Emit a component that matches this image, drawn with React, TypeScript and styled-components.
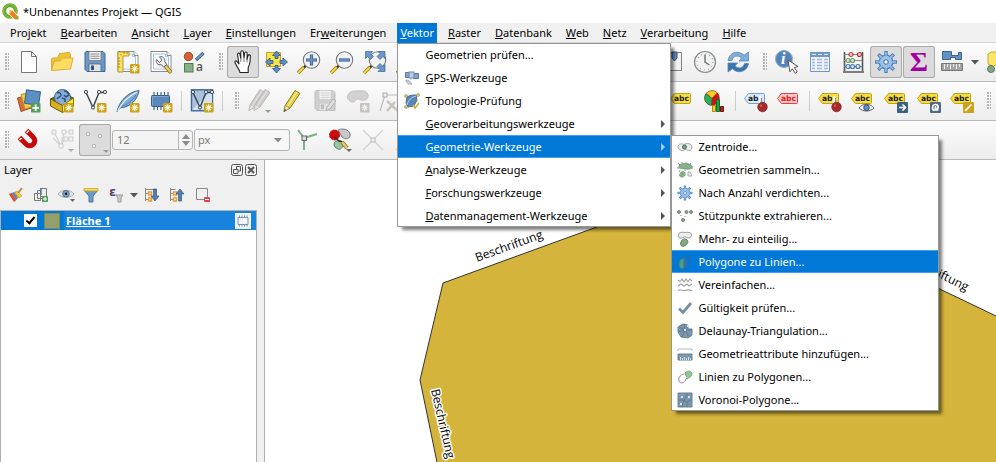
import React from "react";
import styled, { createGlobalStyle, css } from "styled-components";

const Global = createGlobalStyle`
  *, *::before, *::after { box-sizing: border-box; }
  body { margin: 0; overflow: hidden; }
  body, button, input, select {
    font-family: "Noto Sans", "Open Sans", sans-serif;
    font-size: 11px;
    line-height: 16px;
    color: #000;
  }
  button { border: 0; padding: 0; background: none; }
  svg { display: block; overflow: visible; }
`;

/* ---------- frame ---------- */

const Window = styled.div`
  display: flex;
  flex-direction: column;
  height: 100vh;
  min-height: 300px;
  background: #f0f0f0;
`;

const TitleBar = styled.header`
  display: flex;
  align-items: center;
  gap: 4px;
  height: 23px;
  padding: 0 2px;
  background: #fff;
`;

const Title = styled.h1`
  margin: 0;
  font-size: 11px;
  font-weight: 400;
`;

const MenuBar = styled.nav`
  display: flex;
  height: 20px;
  padding-left: 3px;
  border-bottom: 1px solid #d4d4d4;
`;

const MenuSlot = styled.div`
  position: relative;
  height: 20px;
`;

const MenuTitle = styled.button<{ $open?: boolean }>`
  height: 20px;
  padding: 0 7px;
  white-space: nowrap;
  ${(p) =>
    p.$open &&
    css`
      padding: 0 3px;
      margin: 0 4px;
      background: #0078d7;
      color: #fff;
    `}
`;

const Popup = styled.div<{ $width: number; $sub?: boolean }>`
  position: absolute;
  z-index: ${(p) => (p.$sub ? 3 : 2)};
  top: ${(p) => (p.$sub ? "0" : "100%")};
  left: ${(p) => (p.$sub ? "100%" : "4px")};
  width: ${(p) => p.$width}px;
  background: #fff;
  box-shadow: 4px 4px 3px -1px rgba(0, 0, 0, 0.5);
  &::after {
    content: "";
    position: absolute;
    inset: 0;
    border: 1px solid #979797;
    pointer-events: none;
  }
`;

const PopupRow = styled.div`
  position: relative;
`;

const PopupItem = styled.button<{ $active?: boolean }>`
  display: grid;
  grid-template-columns: 16px 1fr 8px;
  align-items: center;
  column-gap: 5px;
  width: 100%;
  height: 23px;
  padding: 0 4px 0 6px;
  text-align: left;
  white-space: nowrap;
  color: ${(p) => (p.$active ? "#fff" : "#000")};
  background: ${(p) => (p.$active ? "#0078d7" : "transparent")};
  box-shadow: ${(p) => (p.$active ? "inset 0 1px #42a0f0, inset 0 -1px #42a0f0" : "none")};
`;

const RootPopupItem = styled(PopupItem)`
  padding-left: 7px;
`;

/* ---------- toolbars ---------- */

const Toolbar = styled.div`
  display: flex;
  align-items: center;
  gap: 1px;
  height: 39px;
  overflow: hidden;
  border-bottom: 1px solid #b9b9b9;
  background: linear-gradient(#fcfcfc, #ededed);
  & > * { flex: none; }
`;

const Handle = styled.span<{ $first?: boolean }>`
  width: ${(p) => (p.$first ? 12 : 15)}px;
  height: 18px;
  padding: 0 3px 0 ${(p) => (p.$first ? 5 : 8)}px;
  background: radial-gradient(circle at 1px 1px, #b4b4b4 0 1px, transparent 1px) content-box 0 0 / 3px 3px;
`;

const Separator = styled.span`
  width: 7px;
  height: 20px;
  background: linear-gradient(#ccc, #ccc) center / 1px 100% no-repeat;
`;

const Behind = styled.span`
  width: 257px;
`;

const Tool = styled.button<{ $on?: boolean }>`
  display: grid;
  place-items: center;
  width: 32px;
  height: 32px;
  border-radius: 3px;
  ${(p) =>
    p.$on &&
    css`
      background: #dcdcdc;
      box-shadow: inset 0 0 0 1px #a9a9a9;
    `}
`;

const DropArrow = styled.button`
  display: grid;
  place-items: center;
  width: 12px;
  height: 32px;
`;

const Spin = styled.label`
  display: flex;
  width: 81px;
  height: 20px;
  border: 1px solid #b4b4b4;
  border-radius: 3px;
  background: #f4f4f4;
`;

const SpinInput = styled.input`
  flex: 1;
  min-width: 0;
  padding: 0 4px;
  border: 0;
  background: none;
  color: #787878;
`;

const SpinArrows = styled.span`
  display: grid;
  place-items: center;
  width: 14px;
  border-left: 1px solid #b4b4b4;
`;

const UnitBox = styled.label`
  display: grid;
  align-items: center;
  width: 96px;
  height: 22px;
  border: 1px solid #b4b4b4;
  border-radius: 3px;
  background: #f7f7f7;
  & > * { grid-area: 1 / 1; }
  & > svg { justify-self: end; margin-right: 7px; pointer-events: none; }
`;

const UnitSelect = styled.select`
  appearance: none;
  width: 100%;
  height: 20px;
  padding: 0 3px;
  border: 0;
  background: none;
  color: #787878;
`;

/* ---------- work area ---------- */

const Work = styled.main`
  display: flex;
  flex: 1;
  min-height: 0;
`;

const Dock = styled.aside`
  display: flex;
  flex-direction: column;
  width: 265px;
  flex: none;
  padding: 0 7px 0 0;
  border-right: 1px solid #b0b0b0;
`;

const DockHead = styled.div`
  display: flex;
  align-items: center;
  gap: 1px;
  height: 20px;
  padding-left: 4px;
`;

const DockTitle = styled.h2`
  flex: 1;
  margin: 0;
  font-size: 11px;
  font-weight: 400;
`;

const DockButton = styled.button`
  display: grid;
  place-items: center;
  width: 13px;
  height: 13px;
`;

const DockTools = styled.div`
  display: flex;
  align-items: center;
  gap: 1px;
  height: 30px;
  padding-left: 4px;
`;

const DockTool = styled.button`
  display: grid;
  place-items: center;
  width: 24px;
  height: 24px;
`;

const DockArrow = styled.button`
  display: grid;
  place-items: center;
  width: 10px;
  height: 24px;
`;

const Tree = styled.div`
  flex: 1;
  border: 1px solid #b0b0b0;
  border-bottom: 0;
  background: #fff;
`;

const LayerRow = styled.div`
  display: flex;
  align-items: center;
  height: 19px;
  padding: 0 5px 0 23px;
  background: linear-gradient(90deg, #0078d7 0 62px, #1883dc 64px);
`;

const Check = styled.input`
  appearance: none;
  display: grid;
  place-items: center;
  width: 13px;
  height: 13px;
  margin: 0;
  background: #fff;
  &:checked::after {
    content: "";
    width: 5px;
    height: 9px;
    margin-top: -2px;
    border: solid #000;
    border-width: 0 2px 2px 0;
    transform: rotate(40deg);
  }
`;

const Swatch = styled.span`
  width: 16px;
  height: 16px;
  margin: 0 6px 0 7px;
  border: 1px solid #7d8a55;
  background: #949f6b;
`;

const LayerName = styled.label`
  flex: 1;
  color: #fff;
  font-weight: 700;
  text-decoration: underline;
`;

const MemoryBadge = styled.button`
  display: grid;
  place-items: center;
  width: 16px;
  height: 16px;
  background: #f2f5f8;
`;

const Canvas = styled.section`
  flex: 1;
  min-width: 0;
  overflow: hidden;
  background: #fff;
  & > svg { width: 100%; height: 100%; }
`;

/* ---------- icon helpers ---------- */

type Kids = { children?: React.ReactNode };

const I = ({ children }: Kids) => (
  <svg width="24" height="24" viewBox="0 0 24 24" fill="none" aria-hidden="true">
    {children}
  </svg>
);

const S = ({ children }: Kids) => (
  <svg width="16" height="16" viewBox="0 0 16 16" fill="none" aria-hidden="true">
    {children}
  </svg>
);

const Tri = ({ color = "#555" }: { color?: string }) => (
  <svg width="8" height="5" viewBox="0 0 8 5" aria-hidden="true">
    <path d="M0 0h8L4 4.5z" fill={color} />
  </svg>
);

const Corner = ({ c = "#666" }: { c?: string }) => <path d="M18 21h6l-3 3z" fill={c} />;

const Star = ({ gray }: { gray?: boolean }) => (
  <>
    <rect x="14" y="14" width="9.5" height="9.5" rx="1" fill={gray ? "#c4c2bb" : "#cba31b"} />
    <path
      d="M18.7 15.3v7M15.3 18.8h7M16.3 16.4l4.8 4.8M21.1 16.4l-4.8 4.8"
      stroke={gray ? "#f0f0f0" : "#fff8df"}
      strokeWidth="1.1"
    />
  </>
);

const Lens = ({ children }: Kids) => (
  <I>
    <path d="M9 15.5l-3 3" stroke="#222" strokeWidth="2.4" />
    <path d="M7 17L1 23" stroke="#a68215" strokeWidth="3.6" />
    <path d="M6.6 17.4L1.2 22.8" stroke="#fbd94c" strokeWidth="1.8" />
    <circle cx="14.5" cy="10" r="8.2" fill="#f2f2f2" stroke="#777" strokeWidth="1.1" />
    {children}
  </I>
);

const Pencil = ({ fill, edge }: { fill: string; edge: string }) => (
  <>
    <path d="M4 22.5l1.2-6L15 1.5l5 3L10 19z" fill={fill} stroke={edge} />
    <path d="M7 18L17 3" stroke="#fff" strokeOpacity=".45" strokeWidth="1.4" />
    <path d="M4 22.5l1.2-6 4.8 2.6z" fill="#f3e8c7" stroke={edge} strokeWidth=".7" />
    <path d="M4 22.7l.6-2.8 1.8 1.2z" fill="#444" />
  </>
);

const GrayPencil = () => (
  <>
    <path d="M4 22.5l1.2-6L15 1.5l5 3L10 19z" fill="#cfcaca" stroke="#bdb7b7" />
    <path d="M7.5 17.5L17 3" stroke="#e2dfdf" strokeWidth="1.4" />
    <path d="M4 22.5l1.2-6 4.8 2.6z" fill="#e6e2de" stroke="#bdb7b7" strokeWidth=".7" />
  </>
);

const Tag = ({
  text = "abc",
  fill = "#f6dc3c",
  edge = "#bda31c",
  ink = "#222",
  children,
}: Kids & { text?: string; fill?: string; edge?: string; ink?: string }) => (
  <I>
    <path d="M.5 9.5l4-5h15q1 0 1 1v8q0 1-1 1h-15z" fill={fill} stroke={edge} />
    <text x="4" y="12.3" fontFamily="DejaVu Sans" fontWeight="700" fontSize="7.6" fill={ink}>
      {text}
    </text>
    {children}
  </I>
);

const Pin = () => (
  <>
    <path d="M16.5 15V9" stroke="#fff" strokeWidth="3.4" strokeLinecap="round" />
    <path d="M17.5 15V9" stroke="#888" strokeWidth="1.2" />
    <circle cx="18.5" cy="18" r="4.8" fill="#a52a2a" stroke="#7d1a1a" strokeWidth=".6" />
    <circle cx="17" cy="16.6" r="1.2" fill="#c96a6a" />
  </>
);

const teeth = [0, 45, 90, 135, 180, 225, 270, 315];

const Gear = ({ r, c }: { r: number; c: number }) => (
  <>
    {teeth.map((a) => (
      <path
        key={a}
        d={`M${c} ${c - r * 0.5}V${c - r}`}
        stroke="#4b83bf"
        strokeWidth={r * 0.32}
        transform={`rotate(${a} ${c} ${c})`}
      />
    ))}
    <circle cx={c} cy={c} r={r * 0.62} fill="#9cc0e6" stroke="#4b83bf" strokeWidth={r * 0.12} />
    {teeth.map((a) => (
      <path
        key={a}
        d={`M${c} ${c - r * 0.5}V${c - r * 0.9}`}
        stroke="#9cc0e6"
        strokeWidth={r * 0.14}
        transform={`rotate(${a} ${c} ${c})`}
      />
    ))}
    <circle cx={c} cy={c} r={r * 0.2} fill="#f4f8fc" stroke="#4b83bf" strokeWidth={r * 0.1} />
  </>
);

const Chip = () => (
  <>
    <path d="M5 3v18M8.500 3v18M12 3v18M15.500 3v18M19 3v18" stroke="#365f8c" strokeWidth="1.1" />
    <rect x="2.5" y="6.5" width="18" height="11" rx="1" fill="#5a88ba" stroke="#365f8c" />
    <path d="M3.5 16V7.5h16" stroke="#7fa5cf" />
  </>
);

const Vee = ({ c = "#34434f" }: { c?: string }) => (
  <>
    <path d="M3 3.5L10 18.5 16 3.5h6" stroke={c} strokeWidth="1.4" />
    <g fill="#fff" stroke={c}>
      <circle cx="3" cy="3" r="1.6" />
      <circle cx="10" cy="18.5" r="1.6" />
      <circle cx="16" cy="3" r="1.6" />
      <circle cx="22" cy="3" r="1.6" />
    </g>
  </>
);

const Page = () => (
  <>
    <path d="M2 1.5h16l4 4v16H2z" fill="#fff" stroke="#8c8c8c" />
    <path d="M4.5 4h12v2.5h3V19h-15z" fill="#f6f9ff" stroke="#a9c0e0" />
    <path d="M18 1.5v4h4" fill="#fff" stroke="#8c8c8c" />
  </>
);

const badge = (fill: string, d: string) => (
  <>
    <rect x="13" y="13" width="11" height="11" rx="1" fill={fill} />
    <path d={d} stroke="#fff" strokeWidth="1.7" />
  </>
);

/* ---------- icons ---------- */

const Disk = ({ gray }: { gray?: boolean }) => (
  <>
    <path
      d="M3 1.5h17l2 2v18H4l-2-2v-17z"
      fill={gray ? "#d0d0d0" : "#6c98c8"}
      stroke={gray ? "#bdbdbd" : "#3d6795"}
    />
    <path d="M6 1.5h12v9H6z" fill="#f4f4f4" stroke={gray ? "#c8c8c8" : "#777"} strokeWidth=".8" />
    <path d="M7.5 4h9M7.5 6.2h9M7.5 8.4h9" stroke={gray ? "#d0d0d0" : "#8a8a8a"} />
    <path d="M6 14h12v7.5H6z" fill="#e3e3e3" stroke={gray ? "#c4c4c4" : "#47658a"} strokeWidth=".8" />
    <path d="M8 15.5h3v4.5H8z" fill={gray ? "#bbb" : "#34537a"} />
  </>
);

const fileTools: [string, React.ReactNode][] = [
  [
    "Neu",
    <I>
      <path d="M4.5 1.5h10l5 5v16h-15z" fill="#fff" stroke="#757575" />
      <path d="M14.5 1.5v5h5" stroke="#757575" />
    </I>,
  ],
  [
    "Öffnen",
    <I>
      <path d="M1.5 20V9l1-1h5l2-4.500 10-1 1 2v3z" fill="#f0c232" stroke="#d9ae35" />
      <path d="M1.5 20.5L4 11h6l2-3h11L20.5 19z" fill="#ffdc63" stroke="#d9ae35" />
    </I>,
  ],
  ["Speichern", <I><Disk /></I>],
  [
    "Neues Layout",
    <I>
      <Page />
      <path d="M2 2h11v4H7v16H2z" fill="#fbe06a" stroke="#bb981a" />
      <path d="M5 4v1.5M8 2v2M11 2v2M2 8h2M2 11h2.500M2 14h2M2 17h2.500" stroke="#9d7d10" strokeWidth=".8" />
      <Star />
    </I>,
  ],
  [
    "Layoutverwaltung",
    <I>
      <Page />
      <path d="M15 14l6 7.5" stroke="#8f7414" strokeWidth="4" strokeLinecap="round" />
      <path d="M15 14l6 7.5" stroke="#e5cb6d" strokeWidth="2.4" strokeLinecap="round" />
      <path
        d="M7.5 9.5l3 3 2.500-2.500-2.500-3.200c3-1 6 1.500 5.300 5l2 2.700-3 2.500-2.500-2.300c-3.500.8-5.800-2-4.800-5.200z"
        fill="#eee"
        stroke="#555"
        strokeWidth=".9"
      />
    </I>,
  ],
  [
    "Stilverwaltung",
    <I>
      <circle cx="6.5" cy="6.5" r="4.2" fill="#d2613a" stroke="#a84320" />
      <path d="M14 10L21.5 3" stroke="#34537a" strokeWidth="3.2" />
      <path d="M14.5 9.5L21 3.5" stroke="#6f9bca" strokeWidth="1.8" />
      <rect x="2.5" y="13.5" width="8.5" height="8.5" fill="#86b083" stroke="#56785a" />
      <text x="14" y="21" fontFamily="Open Sans" fontSize="12" fontWeight="600" fill="#555">a</text>
    </I>,
  ],
];

const cornerArrows = (
  <path
    d="M2.5 1.5h7l-2 2 3 3-3 3-3-3-2 2zM22 1.5h-7l2 2-3 3 3 3 3-3 2 2zM22 21.500h-7l2-2-3-3 3-3 3 3 2-2z"
    fill="#6b98c9"
    stroke="#3c658f"
    strokeWidth=".7"
  />
);

const hiddenMapTools = [
  "Zur Auswahl zoomen",
  "Auf Layer zoomen",
  "Native Auflösung",
  "Zoom zurück",
  "Zoom vor",
  "Neue Ansicht",
  "3D-Ansicht",
  "Neues Lesezeichen",
];

const mapTools: [string, React.ReactNode, boolean?][] = [
  [
    "Karte verschieben",
    <I>
      <path
        d="M9 22.5C8.5 19 5.5 17 4 12.500c-.6-1.800 1.400-2.200 2.300-.7L8 14.200 6.600 4.800C6.400 2.600 8.600 2.600 9 4.500l.8 4L9.800 2.300c0-2 2.600-2 2.700 0l.5 6 .6-5c.3-1.900 2.600-1.600 2.600.2l-.2 6 1-3.600c.5-1.700 2.600-1.200 2.400.6-.3 3.500-.1 7.500-2.200 11v5z"
        fill="#fff"
        stroke="#222"
        strokeWidth="1.1"
      />
      <path d="M9.800 8v4M13 8v4M16 9v3.500" stroke="#444" strokeWidth=".7" />
    </I>,
    true,
  ],
  [
    "Zur Auswahl verschieben",
    <I>
      <path d="M2.500 2.500h14v14h-14z" fill="#fbe34a" stroke="#c2a51d" />
      <path
        d="M12.500 1l4 4.500h-2.500v3h-3v-3H8.500zM12.500 23l4-4.500h-2.500v-3h-3v3H8.500zM1.500 12L6 8v2.500h3v3H6V16zM23.500 12L19 8v2.500h-3v3h3V16z"
        fill="#5f8fc4"
        stroke="#2f5580"
        strokeWidth=".8"
      />
    </I>,
  ],
  [
    "Hineinzoomen",
    <Lens>
      <path d="M14.500 4.500v11M9 10h11" stroke="#355f8d" strokeWidth="3.2" />
      <path d="M14.500 5.200v9.600M9.700 10h9.600" stroke="#6b98c9" strokeWidth="1.6" />
    </Lens>,
  ],
  [
    "Hinauszoomen",
    <Lens>
      <path d="M9 10h11" stroke="#355f8d" strokeWidth="3.2" />
      <path d="M9.700 10h9.600" stroke="#6b98c9" strokeWidth="1.6" />
    </Lens>,
  ],
  ["Volle Ausdehnung", <Lens>{cornerArrows}</Lens>],
  ...hiddenMapTools.map((n) => [n, <Lens />] as [string, React.ReactNode]),
  [
    "Lesezeichen",
    <I>
      <path d="M2.500 2.500h19v18h-19z" fill="#f2f2f2" stroke="#808080" />
      <path d="M12 2v6l2.500 3L17 8V2z" fill="#5f8fc4" stroke="#34537a" />
    </I>,
  ],
  [
    "Zeitsteuerung",
    <I>
      <circle cx="12" cy="12" r="10.5" fill="#f2f2f0" stroke="#868686" strokeWidth="1.2" />
      <circle cx="12" cy="12" r="8" stroke="#7fa6cc" strokeWidth="1.2" strokeDasharray="1 3.19" />
      <path d="M12 4.500V12l4.500 3" stroke="#777" strokeWidth="1.5" />
    </I>,
  ],
  [
    "Aktualisieren",
    <I>
      <path
        d="M2 10.500C3 4.500 8 1.500 13 2.500c2 .4 3.700 1.400 5 2.800L22.500 2v9H13l2.500-3C11.500 4.500 7 6 6 10.500z"
        fill="#7faedb"
        stroke="#5488bb"
        strokeWidth=".8"
      />
      <path
        d="M22.500 13.500c-1 6-6 9-11 8-2-.4-3.700-1.400-5-2.800L2 22v-9h9.500L9 16c4 3.500 8.500 2 9.500-2.500z"
        fill="#3b73ad"
        stroke="#5488bb"
        strokeWidth=".8"
      />
    </I>,
  ],
];

const inspectTools: [string, React.ReactNode, boolean?][] = [
  [
    "Objekte abfragen",
    <I>
      <circle cx="9" cy="9" r="8.5" fill="#5484b8" stroke="#88add4" />
      <text x="6" y="14" fontFamily="Liberation Serif" fontStyle="italic" fontWeight="700" fontSize="16" fill="#fff">i</text>
      <path d="M13 10l10 6.500-3.700 1 3 4.500-2 1.300-3-4.500-2.400 3z" fill="#fff" stroke="#555" />
    </I>,
  ],
  [
    "Attributtabelle",
    <I>
      <path d="M2.500 2.500h19v19h-19z" fill="#f0f4fa" stroke="#6f99c5" />
      <path d="M2.500 2.500h19v4h-19z" fill="#6f99c5" stroke="#6f99c5" />
      <path d="M4 4.500h4M10 4.500h4M16 4.500h4" stroke="#dce8f5" />
      <path d="M4 9.500h3M4 12.500h3M4 15.500h3M4 18.500h3M9 9.500h5M9 12.500h5M9 15.500h5M9 18.500h5M16 9.500h4M16 12.500h4M16 15.500h4M16 18.500h4" stroke="#9fb9d6" strokeWidth="1.4" />
    </I>,
  ],
  [
    "Feldrechner",
    <I>
      <path d="M3.500 2v19M21.500 2v19M2 22h21" stroke="#555" strokeWidth="1.6" />
      <path d="M3 4.500h18M3 10.500h18M3 16.500h18" stroke="#888" />
      <g strokeWidth="1.2">
        <g fill="#f7d3d3" stroke="#b33">
          <circle cx="10" cy="4.500" r="2" /><circle cx="18.500" cy="4.500" r="2" />
        </g>
        <g fill="#d5efd3" stroke="#6a9a60">
          <circle cx="7" cy="10.500" r="2" /><circle cx="11.500" cy="10.500" r="2" />
        </g>
        <g fill="#dbe8f7" stroke="#4878a8">
          <circle cx="7" cy="16.500" r="2" /><circle cx="11.500" cy="16.500" r="2" /><circle cx="17" cy="16.500" r="2" />
        </g>
      </g>
    </I>,
  ],
  ["Werkzeugkiste", <I><Gear r={11} c={12} /></I>, true],
  [
    "Statistik",
    <I>
      <text x="12" y="21" textAnchor="middle" fontFamily="Liberation Serif" fontWeight="700" fontSize="28" fill="#a300a3">Σ</text>
    </I>,
    true,
  ],
  [
    "Messen",
    <I>
      <path d="M2.500 1.500h9v4h7v-3h3v7h-6v-2h-5v2h-8z" fill="#6491c3" stroke="#3c658f" />
      <path d="M1.500 13.500h21v7h-21z" fill="#a4a4a4" stroke="#777" />
      <path d="M4.500 14v5M7.500 14v3M10.500 14v5M13.500 14v3M16.500 14v5M19.500 14v3" stroke="#eee" />
    </I>,
  ],
];

const tip = (
  <I>
    <path d="M5 2h17v13H9l-4 4v-4H3l-1-2V4z" fill="#fbe56a" stroke="#c2a92c" />
    <circle cx="5" cy="19" r="3.5" fill="#86a583" stroke="#5c7a5a" />
  </I>
);

const layerTools: [string, React.ReactNode][] = [
  [
    "Datenquellenverwaltung",
    <I>
      <path d="M.5 9L11 6l3 13-10 3.500z" fill="#d9703c" stroke="#a34c1f" />
      <path d="M4 5.500L14 3l3 14-9 3z" fill="#f0cf4a" stroke="#b8961f" />
      <path d="M9.500.8l14 2-2 13.500-14-2z" fill="#5d8fc2" stroke="#34608e" />
      <rect x="14" y="14" width="9.5" height="9.5" rx="1" fill="#5a9a5f" />
      <path d="M18.700 15.500v6.600M15.400 18.800H22" stroke="#fff" strokeWidth="1.8" />
    </I>,
  ],
  [
    "Neuer GeoPackage-Layer",
    <I>
      <path d="M.5 10L8 6h9l6.500 3-10 6z" fill="#8a6e12" stroke="#5e4b0e" />
      <circle cx="12.500" cy="8.500" r="8" fill="#86aedb" stroke="#3c658f" />
      <path d="M7 4c2-1 4 0 4 2s-3 2-4 4M14 2c2 0 4 2 5 4l-3 2-2-2M12 9l3 1v3" stroke="#34537a" strokeWidth="1.6" />
      <path d="M.5 10l12 6.500v7L.5 17z" fill="#d9b020" stroke="#6e580f" />
      <path d="M23.500 9l-11 7.500v7l11-6z" fill="#fff22e" stroke="#8c7410" />
      <Star />
    </I>,
  ],
  ["Neuer Shapefile-Layer", <I><Vee /><Star /></I>],
  [
    "Neuer SpatiaLite-Layer",
    <I>
      <path d="M1 23C3 12 12 3 23 1.500c-1 6-5 14-14 16.500-2 .5-4 .5-5 1z" fill="#80abd8" stroke="#3c658f" />
      <path d="M1.500 22.500C6 13 13 7 21 3" stroke="#e9f2fb" strokeWidth="1.2" />
      <path d="M6 17c5-1 10-5 14-11" stroke="#4f7fb1" />
      <Star />
    </I>,
  ],
  ["Temporärlayer", <I><Chip /><Star /></I>],
];

const virtualTool = (
  <I>
    <rect x="1.500" y=".8" width="21" height="21" fill="#a9c3de" stroke="#3f6b99" strokeWidth="1.4" />
    <path d="M2 21L22 1v20z" fill="#d4e2f0" />
    <Vee />
    <Star />
  </I>
);

const editTools: [string, React.ReactNode][] = [
  [
    "Aktuelle Bearbeitungen",
    <I>
      <g transform="translate(-2 -1)"><GrayPencil /></g>
      <g transform="translate(3 -1)"><GrayPencil /></g>
      <Corner c="#999" />
    </I>,
  ],
  ["Bearbeitung umschalten", <I><Pencil fill="#ecd03c" edge="#8d7a1f" /></I>],
  [
    "Änderungen speichern",
    <I>
      <Disk gray />
      <path d="M13 22l1-4 6-8 3 2-6 8z" fill="#ddd" stroke="#b5b0b0" />
    </I>,
  ],
  [
    "Polygon hinzufügen",
    <I>
      <path d="M2 6C4 1 10 2 13 2c6-1 10 2 9 6s-6 4-9 2c-3-1-3 3-6 3-4 0-7-4-5-7z" fill="#d2d2d2" stroke="#c2c2c2" />
      <Star gray />
    </I>,
  ],
  [
    "Knotenwerkzeug",
    <I>
      <path d="M1 22L6 6h18" stroke="#bbb" strokeWidth="1.2" />
      <rect x="4" y="4" width="4" height="4" fill="#eee" stroke="#aaa" />
      <path d="M8 22l8-9M8 12l12 11" stroke="#c8c5bf" strokeWidth="2.5" />
    </I>,
  ],
];

const labelTools: [string, React.ReactNode][][] = [
  [
    ["Beschriftungsoptionen", <Tag />],
    [
      "Diagrammoptionen",
      <I>
        <circle cx="9" cy="9" r="7.3" fill="#cc1512" stroke="#8e1010" strokeWidth=".6" />
        <path d="M9 9L2.800 5A7.300 7.300 0 0 0 8 16.200z" fill="#2fae5a" stroke="#1d7a3c" strokeWidth=".6" />
        <path d="M9 9L3.500 4.200A7.300 7.300 0 0 1 14 3.800z" fill="#f6cc2a" stroke="#a98712" strokeWidth=".6" />
        <path d="M9.500 16.500h3v6h-3z" fill="#f6cc2a" stroke="#a98712" />
        <path d="M13.500 10.500h3v12h-3z" fill="#1fa34a" stroke="#0e6d2c" />
        <path d="M17.500 17.500h3v5h-3z" fill="#c4201c" stroke="#701010" />
      </I>,
    ],
  ],
  [
    ["Fixierte anzeigen", <Tag text="ab" fill="#d8ebff" edge="#6b9fd6"><Pin /></Tag>],
    ["Nicht platzierte anzeigen", <Tag fill="#ffc9c9" edge="#f0393c" ink="#f01818" />],
  ],
  [
    ["Beschriftung fixieren", <Tag text="ab"><Pin /></Tag>],
    [
      "Beschriftung anzeigen",
      <Tag>
        <path d="M8 19c4-5 11-5 15 0-4 4-11 4-15 0z" fill="#fff" stroke="#555" />
        <circle cx="15.500" cy="18.700" r="2.8" fill="#5d94c9" stroke="#234" strokeWidth=".8" />
      </Tag>,
    ],
    ["Beschriftung verschieben", <Tag>{badge("#3f6180", "M15 18.500h6M18.500 15.500l3 3-3 3")}</Tag>],
    ["Beschriftung drehen", <Tag>{badge("#4f6b84", "M17.500 21.500c-3-1-2.500-6 1-6 3.500 0 3.500 5 .5 4.500M18.500 17v4h3")}</Tag>],
    ["Beschriftung ändern", <Tag>{badge("#cba31b", "M15 22l6.500-6.500")}</Tag>],
  ],
];

const snapTools = {
  magnet: (
    <I>
      <g transform="rotate(-45 12 12)">
        <path d="M7 6.500V13a5 5 0 0 0 10 0V6.500" stroke="#c80808" strokeWidth="5" />
        <path d="M5 6.500V4h4v2.500zM15 6.500V4h4v2.500z" fill="#fff" stroke="#c80808" />
      </g>
    </I>
  ),
  nodes: (
    <I>
      <path d="M4 4l7 14 4-8h6M11 18L14 4h6M11 10h9M3 10l8 8" stroke="#d2d2d2" strokeWidth="1.2" />
      <path
        d="M2 2h4v4H2zM12 2h4v4h-4zM19 2h4v4h-4zM9 16h4v4H9zM14 9h4v4h-4zM19 9h4v4h-4z"
        fill="#f3f3f3"
        stroke="#cdcdcd"
      />
      <Corner c="#aaa" />
    </I>
  ),
  vertex: (
    <I>
      <path d="M3.500 4.500h3v3h-3zM15.500 6.500h3v3h-3zM9.500 16.500h3v3h-3z" fill="#eee" stroke="#b8b8b8" />
      <path d="M20 22h6l-3 3z" fill="#999" />
    </I>
  ),
  topo: (
    <I>
      <path d="M9 10L3 2M9 10l13-4M9 10v12" stroke="#7fb083" strokeWidth="2" />
      <rect x="7" y="8" width="4.500" height="4.500" fill="#ddd" stroke="#666" />
    </I>
  ),
  overlap: (
    <I>
      <path d="M10 2c4-2 11-1 12 4s-5 6-8 3z" fill="#c9c9c9" stroke="#777" />
      <path d="M6 16c0-3 5-4 7-3s3 3 2 5-3 4-5 3-4-2-4-5z" fill="#9cc4a0" stroke="#5a8060" />
      <circle cx="6.500" cy="7" r="5" fill="#d40808" stroke="#b00505" strokeDasharray="2 1" />
      <path d="M6 9l5 4 4 1" stroke="#333" strokeWidth="1.5" />
      <path d="M14 14l5 6" stroke="#8f7414" strokeWidth="4" />
      <path d="M14 14l5 6" stroke="#e5cb6d" strokeWidth="2.4" />
      <Corner />
    </I>
  ),
  cross: (
    <I>
      <path d="M2 2l20 20M22 2L2 22" stroke="#d2d2d2" strokeWidth="1.4" />
      <rect x="10" y="10" width="4" height="4" fill="#eee" stroke="#bbb" />
    </I>
  ),
  trace: <I><path d="M2 22L22 2" stroke="#d2d2d2" strokeWidth="1.4" /></I>,
};

const satellite = (
  <S>
    <path d="M1.500 2.500h4v5h-4zM9.500 3.500h5v5h-5z" fill="#86a5c6" stroke="#55789e" />
    <rect x="5" y="2" width="5" height="6" fill="#b9cde2" stroke="#6d8bab" />
    <path d="M7 8v2M2 10c0 3 3 5 6 4L5 10.500z" fill="#c9ced3" stroke="#a5afb9" />
  </S>
);

const topology = (
  <S>
    <path d="M3 4c3-2 6-2 9-2l1 5-3 6-6 1-2-4z" fill="#5b86b4" stroke="#46709c" />
    <path d="M3 12c1-5 5-8 9-9" stroke="#b9d0e8" />
    <g fill="#d9cd78" stroke="#96893a" strokeWidth=".6">
      <circle cx="2" cy="3" r="1.500" /><circle cx="14" cy="2" r="1.500" /><circle cx="2" cy="14" r="1.500" />
    </g>
    <path d="M9 12l2 3 4-5" stroke="#d6b52e" strokeWidth="1.8" />
  </S>
);

const geometryItems: [string, React.ReactNode][] = [
  [
    "Zentroide...",
    <S>
      <path d="M1 8C1.500 4 5 4.500 7 5.500 9 4 15 4 15 8c0 4-4 4-6.500 2.500C6 12 1.500 12 1 8z" fill="#ededed" stroke="#a3a3a3" />
      <circle cx="7.500" cy="8" r="2" fill="#7aa57c" stroke="#4b6e4f" />
    </S>,
  ],
  [
    "Geometrien sammeln...",
    <S>
      <path d="M1 1l2 2M5 0v2M9 0v2M14 1l-2 2M0 6h2M14 6h2M3 8l-1 2M8 7v2" stroke="#999" />
      <path d="M2 4c2-3 9-3 12-1s0 5-5 4-8 0-7-3z" fill="#87b286" stroke="#7ba07c" />
      <path d="M3 12c1-3 4-3 5-1s-1 4-3 4-3-1-2-3z" fill="#87b286" stroke="#7ba07c" />
      <path d="M11 10h2l2 4h-4z" fill="#eee" stroke="#aaa" />
    </S>,
  ],
  ["Nach Anzahl verdichten...", <S><Gear r={7.5} c={8} /></S>],
  [
    "Stützpunkte extrahieren...",
    <S>
      <g fill="#86a98a" stroke="#5d7e63" strokeWidth=".8">
        <circle cx="2" cy="4" r="1.500" /><circle cx="9.500" cy="4" r="1.500" /><circle cx="14" cy="4" r="1.500" /><circle cx="6" cy="12" r="1.600" />
      </g>
      <path d="M4 7v1M8 8v1" stroke="#888" />
    </S>,
  ],
  [
    "Mehr- zu einteilig...",
    <S>
      <path d="M1.500 4C2 1 5 1 8 1.500c4-.5 7 0 6.500 3s-4 3-5.500 1.500C7 5 5 8 3 7S1 6 1.500 4z" fill="#ededed" stroke="#999" />
      <path d="M4 11c1-3 4-4 6-2s0 5-3 6-4-1-3-4z" fill="#80ab80" stroke="#5b7f5f" />
    </S>,
  ],
  [
    "Polygone zu Linien...",
    <S>
      <path d="M2 10c0-4 3-6 5-6v10c-3 2-5 0-5-4z" fill="#4f9a85" stroke="#2f8080" />
      <path d="M7 14c2-1 3-3 3-5l-3-5" fill="#2f72a8" stroke="#2f72a8" />
      <path d="M8 4c3-2 6-2 6 1s-2 4-4 5" stroke="#2f69a5" />
    </S>,
  ],
  [
    "Vereinfachen...",
    <S><path d="M1 3l2 1.500L5 2l2 3 2-3 2 2.500L13 2l2 2M1 9l3-2 3 2 3-2 2 2 3-2M1 13.500c3-2 4 1 7 0s4-1 7 0" stroke="#a0a0a0" strokeWidth="1.1" /></S>,
  ],
  ["Gültigkeit prüfen...", <S><path d="M2 8.500L6 12.500 14 3" stroke="#7590a6" strokeWidth="2.8" /></S>],
  [
    "Delaunay-Triangulation...",
    <S>
      <path d="M1 4l5-3 5 1v4l4 0v6l-4 3-7-1-3-5z" fill="#7c96ab" stroke="#6b8599" />
      <path d="M2 4l6 3M8 7l-3 7M8 7l7 0M8 7l-7 2M7 1l1 6 4 7" stroke="#587287" strokeWidth=".8" />
      <path d="M7 6h2v2H7zM10 2h2v2h-2z" fill="#dce4ea" />
    </S>,
  ],
  [
    "Geometrieattribute hinzufügen...",
    <S>
      <path d="M1 5V3h14v2" stroke="#bbb" />
      <path d="M1 8h14v6H1z" fill="#7d97ac" stroke="#64808f" />
      <path d="M3.500 11v3M5.500 12v2M7.500 11v3M9.500 12v2M11.500 11v3M13.500 12v2" stroke="#e3eaf0" strokeWidth=".9" />
    </S>,
  ],
  [
    "Linien zu Polygonen...",
    <S>
      <path d="M8 4c3-3 7-2 7 1s-3 3-5 5z" fill="#93c493" stroke="#7ba67d" />
      <path d="M7 5c-4 1-6 4-5 7s5 2 6 0l2-3" fill="#fff" stroke="#8e8e8e" />
    </S>,
  ],
  [
    "Voronoi-Polygone...",
    <S>
      <path d="M1 1h14v14H1z" fill="#7c96ab" stroke="#6b8599" />
      <path d="M1 8h6l4-7M7 8l3 2 5-3M10 10v5M7 8l-2 7" stroke="#587287" strokeWidth=".8" />
      <path d="M4 4h2v2H4zM11 4h2v2h-2zM3 11h2v2H3z" fill="#dce4ea" />
    </S>,
  ],
];

type Entry = { text: string; key?: number; icon?: React.ReactNode; sub?: boolean; open?: boolean };

const vectorItems: Entry[] = [
  { text: "Geometrien prüfen..." },
  { text: "GPS-Werkzeuge", key: 0, icon: satellite },
  { text: "Topologie-Prüfung", icon: topology },
  { text: "Geoverarbeitungswerkzeuge", key: 0, sub: true },
  { text: "Geometrie-Werkzeuge", key: 1, sub: true, open: true },
  { text: "Analyse-Werkzeuge", key: 0, sub: true },
  { text: "Forschungswerkzeuge", key: 0, sub: true },
  { text: "Datenmanagement-Werkzeuge", key: 0, sub: true },
];

const menus: [string, number][] = [
  ["Projekt", 3],
  ["Bearbeiten", 0],
  ["Ansicht", 0],
  ["Layer", 0],
  ["Einstellungen", 0],
  ["Erweiterungen", 2],
  ["Vektor", 0],
  ["Raster", 0],
  ["Datenbank", 0],
  ["Web", 0],
  ["Netz", 0],
  ["Verarbeitung", 0],
  ["Hilfe", 0],
];

const Keyed = ({ text, at }: { text: string; at?: number }) =>
  at === undefined ? (
    <span>{text}</span>
  ) : (
    <span>
      {text.slice(0, at)}
      <u>{text[at]}</u>
      {text.slice(at + 1)}
    </span>
  );

const VectorMenu = () => (
  <Popup $width={274} role="menu">
    {vectorItems.map((m) => (
      <PopupRow key={m.text}>
        <RootPopupItem $active={m.open} role="menuitem">
          <span>{m.icon}</span>
          <Keyed text={m.text} at={m.key} />
          {m.sub && (
            <svg width="8" height="8" viewBox="0 0 8 8" aria-hidden="true">
              <path d="M2 0l4 4-4 4z" fill={m.open ? "#9fd0ff" : "#555"} />
            </svg>
          )}
        </RootPopupItem>
        {m.open && (
          <Popup $width={268} $sub role="menu">
            {geometryItems.map(([text, icon]) => (
              <PopupItem key={text} role="menuitem" $active={text.startsWith("Polygone zu")}>
                {icon}
                <span>{text}</span>
              </PopupItem>
            ))}
          </Popup>
        )}
      </PopupRow>
    ))}
  </Popup>
);

const tools = (list: [string, React.ReactNode, boolean?][]) =>
  list.map(([name, icon, on]) => (
    <Tool key={name} aria-label={name} $on={on}>
      {icon}
    </Tool>
  ));

const dockIcons: [string, React.ReactNode][] = [
  [
    "Layergestaltung",
    <S>
      <path d="M1 7l6-2 4 5-5 5z" fill="#f2a63c" />
      <path d="M1 7l3-1 4 7-2 2z" fill="#e04a3a" />
      <path d="M4 6l2-1 4 6-2 2z" fill="#5a8ac0" />
      <path d="M7 5l2-1 5 5-3 2z" fill="#f4cf3a" stroke="#b98f1c" strokeWidth=".5" />
      <path d="M10 6l4-5" stroke="#b58b3d" strokeWidth="2" />
    </S>,
  ],
  [
    "Gruppe hinzufügen",
    <S>
      <path d="M1.500 6.500h6v7h-6zM4.500 3.500h6v8h-6z" stroke="#777" />
      <path d="M7.500 1.500h6v8h-6z" fill="#eee" stroke="#777" />
      <path d="M8 1v7" stroke="#4f7db0" strokeWidth="1.5" />
      <rect x="9" y="9" width="6" height="6" rx="1" fill="#5a9a5f" />
      <path d="M12 10v4M10 12h4" stroke="#fff" />
    </S>,
  ],
  [
    "Themen",
    <S>
      <path d="M0 7C4 2 12 2 16 7c-4 4.500-12 4.500-16 0z" fill="#e6e6e6" stroke="#aaa" />
      <circle cx="8" cy="6.800" r="3.300" fill="#7ba3cb" stroke="#4a6f96" />
      <circle cx="8" cy="6.800" r="1.200" fill="#111" />
      <path d="M12 12h5l-2.500 3z" fill="#666" />
    </S>,
  ],
  [
    "Filter",
    <S>
      <path d="M1 3h14l-5 6v6H6V9z" fill="#6f9bc9" stroke="#4876a6" />
      <path d="M1 1.500h14V4H1z" fill="#f6dd4a" stroke="#bfa424" strokeWidth=".7" />
    </S>,
  ],
  [
    "Ausdrucksfilter",
    <S>
      <text x="1" y="9" fontFamily="DejaVu Sans" fontWeight="700" fontSize="13" fill="#6a3f70">ε</text>
      <path d="M8 8h7l-2 3v4h-3v-4z" fill="#ccc" stroke="#999" />
    </S>,
  ],
];

const dockIcons2: [string, React.ReactNode][] = [
  [
    "Alles ausklappen",
    <S>
      <path d="M1.500 1v13M1.500 2.500h8M1.500 6.500h3M1.500 12.500h3" stroke="#888" />
      <path d="M4.500 5h3v3h-3zM4.500 11h3v3h-3z" stroke="#f09a2a" strokeWidth="1.3" />
      <path d="M9.500 2h3v7H15l-4 5-4-5h2.500z" fill="#4f7fb5" stroke="#2f5580" strokeWidth=".7" />
    </S>,
  ],
  [
    "Alles einklappen",
    <S>
      <path d="M1.500 1v13M1.500 2.500h5M1.500 6.500h3M1.500 12.500h3" stroke="#888" />
      <path d="M4.500 5h3v3h-3zM4.500 11h3v3h-3z" stroke="#f09a2a" strokeWidth="1.3" />
      <path d="M9.500 14h3V7H15l-4-5-4 5h2.500z" fill="#4f7fb5" stroke="#2f5580" strokeWidth=".7" />
    </S>,
  ],
  [
    "Layer entfernen",
    <S>
      <path d="M2.500 1.500h11v11h-11z" stroke="#888" />
      <rect x="10" y="10" width="6" height="5" rx="1" fill="#e0474c" />
      <path d="M11 12.500h4" stroke="#fff" />
    </S>,
  ],
];

const Logo = () => (
  <svg width="17" height="17" viewBox="0 0 17 17" fill="none" aria-hidden="true">
    <circle cx="8" cy="8" r="5.800" stroke="#6aa72b" strokeWidth="4" />
    <circle cx="8" cy="8" r="6.500" stroke="#86bf3a" strokeWidth="1.2" />
    <path d="M7.500 7.500h3l5 5.500v3h-3l-5-5z" fill="#fff" stroke="#fff" strokeWidth="1.5" />
    <path d="M7.500 7.500h3l5 5.500v3h-3l-5-5z" fill="#f07c1c" />
    <path d="M7.500 7.500h3L7.500 11z" fill="#fbd23c" />
    <path d="M12.500 16.500h4v-4z" fill="#7ab532" />
  </svg>
);

const MapCanvas = () => (
  <Canvas aria-label="Karte">
    <svg>
      <path
        d="M178 123L395 44 485 38 731 156 1800 668V1600H440L155 220z"
        fill="#d4b43b"
        stroke="#333"
      />
      <g
        fontFamily="Open Sans, Noto Sans, sans-serif"
        fontSize="12"
        fill="#000"
        stroke="#fff"
        strokeWidth="3"
        strokeLinejoin="round"
        paintOrder="stroke"
      >
        <text transform="translate(212 102) rotate(-20)">Beschriftung</text>
        <text transform="translate(166 230) rotate(77)">Beschriftung</text>
        <text transform="translate(701 131) rotate(26)" textAnchor="end">Beschriftung</text>
      </g>
    </svg>
  </Canvas>
);

export default function App() {
  return (
    <Window>
      <Global />
      <TitleBar>
        <Logo />
        <Title>*Unbenanntes Projekt — QGIS</Title>
      </TitleBar>
      <MenuBar>
        {menus.map(([text, at]) => (
          <MenuSlot key={text}>
            <MenuTitle $open={text === "Vektor"}>
              <Keyed text={text} at={at} />
            </MenuTitle>
            {text === "Vektor" && <VectorMenu />}
          </MenuSlot>
        ))}
      </MenuBar>

      <Toolbar>
        <Handle $first />
        {tools(fileTools)}
        <Handle />
        {tools(mapTools)}
        <Handle />
        {tools(inspectTools)}
        <DropArrow aria-label="Messarten"><Tri /></DropArrow>
        <Tool aria-label="Kartenhinweise">{tip}</Tool>
      </Toolbar>

      <Toolbar>
        <Handle $first />
        {tools(layerTools)}
        <Separator />
        <Tool aria-label="Virtueller Layer">{virtualTool}</Tool>
        <Separator />
        <Handle />
        {tools(editTools)}
        <Behind />
        {tools(labelTools[0])}
        <Separator />
        {tools(labelTools[1])}
        <Separator />
        {tools(labelTools[2])}
        <Handle />
      </Toolbar>

      <Toolbar>
        <Handle $first />
        <Tool aria-label="Einrasten">{snapTools.magnet}</Tool>
        <Tool aria-label="Einrastmodus">{snapTools.nodes}</Tool>
        <Tool aria-label="Stützpunkt" $on>{snapTools.vertex}</Tool>
        <Spin>
          <SpinInput defaultValue="12" aria-label="Toleranz" />
          <SpinArrows>
            <svg width="8" height="12" viewBox="0 0 8 12" aria-hidden="true">
              <path d="M0 5h8L4 0zM0 7h8l-4 5z" fill="#8a8a8a" />
            </svg>
          </SpinArrows>
        </Spin>
        <UnitBox>
          <UnitSelect aria-label="Einheit">
            <option>px</option>
          </UnitSelect>
          <Tri color="#8a8a8a" />
        </UnitBox>
        <Tool aria-label="Topologisch">{snapTools.topo}</Tool>
        <Tool aria-label="Überlappung">{snapTools.overlap}</Tool>
        <Tool aria-label="Schnittpunkt">{snapTools.cross}</Tool>
        <Tool aria-label="Spur">{snapTools.trace}</Tool>
      </Toolbar>

      <Work>
        <Dock>
          <DockHead>
            <DockTitle>Layer</DockTitle>
            <DockButton aria-label="Abdocken">
              <svg width="12" height="12" viewBox="0 0 12 12" fill="none" stroke="#555">
                <rect x=".5" y=".5" width="11" height="11" rx="2" />
                <path d="M5.500 5V2.500h4V7H7.500M2.500 5.500h4.500v4H2.500z" />
              </svg>
            </DockButton>
            <DockButton aria-label="Schließen">
              <svg width="12" height="12" viewBox="0 0 12 12" fill="none" stroke="#555">
                <rect x=".5" y=".5" width="11" height="11" rx="2" />
                <path d="M3 3l6 6M9 3L3 9" strokeWidth="2" />
              </svg>
            </DockButton>
          </DockHead>
          <DockTools>
            {dockIcons.map(([n, icon]) => (
              <DockTool key={n} aria-label={n}>{icon}</DockTool>
            ))}
            <DockArrow aria-label="Filteroptionen"><Tri /></DockArrow>
            {dockIcons2.map(([n, icon]) => (
              <DockTool key={n} aria-label={n}>{icon}</DockTool>
            ))}
          </DockTools>
          <Tree>
            <LayerRow>
              <Check type="checkbox" id="layer-1" defaultChecked />
              <Swatch />
              <LayerName htmlFor="layer-1">Fläche 1</LayerName>
              <MemoryBadge aria-label="Temporärlayer">
                <svg width="14" height="14" viewBox="0 0 14 14" fill="none" stroke="#7d93a8">
                  <path d="M2 3.500h10v7H2zM3.500 1.500v2M6 1.500v2M8.500 1.500v2M11 1.500v2M3.500 10.500v2M6 10.500v2M8.500 10.500v2M11 10.500v2" />
                </svg>
              </MemoryBadge>
            </LayerRow>
          </Tree>
        </Dock>
        <MapCanvas />
      </Work>
    </Window>
  );
}
